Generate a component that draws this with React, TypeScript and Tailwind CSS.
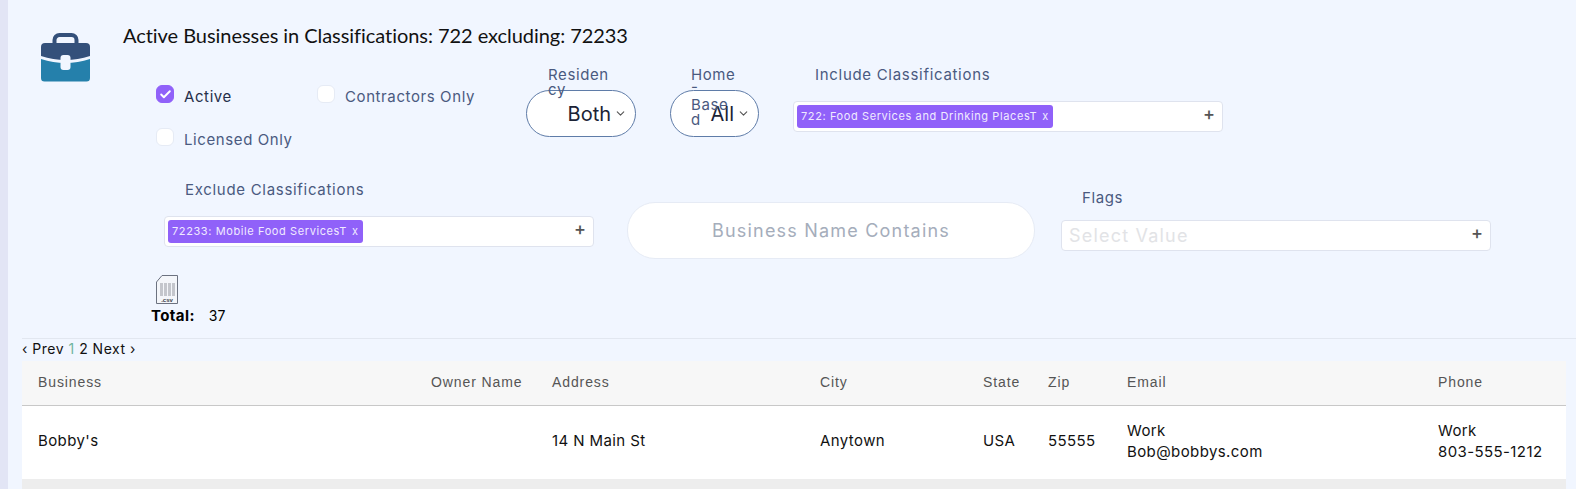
import { ChevronDown, Check } from "lucide-react";

const sans = "font-['Inter','Noto_Sans',sans-serif]";

function Briefcase() {
  return (
    <svg width="49" height="49" viewBox="0 0 49 49" className="shrink-0">
      <path d="M13.5 11V7a5 5 0 0 1 5-5h12a5 5 0 0 1 5 5v4" fill="none" stroke="#34507a" strokeWidth="4" />
      <path d="M4 10h41a4 4 0 0 1 4 4v9Q24.5 31 0 23v-9a4 4 0 0 1 4-4z" fill="#34507a" />
      <path d="M0 26Q24.5 34 49 26v19a3.500 3.500 0 0 1-3.500 3.500h-42A3.500 3.500 0 0 1 0 45z" fill="#2580ab" />
      <rect x="19.500" y="22" width="10" height="15" rx="3" fill="#f1f6ff" />
    </svg>
  );
}

function CsvIcon() {
  return (
    <svg width="22" height="29" viewBox="0 0 22 29">
      <path d="M6 .5h15.500v28H.5V7z" fill="#f4f6fa" stroke="#6c7280" />
      <path d="M4 8h3v13H4zM8 8h3v13H8zM12 8h3v13h-3zM16 8h3v13h-3z" fill="#c4c6cc" />
      <text x="11" y="26.500" textAnchor="middle" fontSize="6" fontWeight="700" fill="#3a3f4a" fontFamily="Liberation Sans, sans-serif">.csv</text>
    </svg>
  );
}

function Box({ checked }: { checked?: boolean }) {
  return (
    <span
      className={`flex size-[18px] shrink-0 items-center justify-center rounded-[6px] border ${
        checked ? "border-[#9061f9] bg-[#9061f9]" : "border-[#e6ebf5] bg-white"
      }`}
    >
      {checked && <Check size={13} strokeWidth={3.5} className="text-white" />}
    </span>
  );
}

function CheckItem({ label, checked }: { label: string; checked?: boolean }) {
  return (
    <div className="flex items-start">
      <Box checked={checked} />
      <span className={`ml-[10px] mt-[3px] text-[15px] leading-[17px] tracking-[0.6px] ${checked ? "text-[#252f4a]" : "text-[#4a5a80]"}`}>
        {label}
      </span>
    </div>
  );
}

function Pill({ value, className }: { value: string; className: string }) {
  return (
    <div className={`flex h-[47px] items-center justify-end rounded-[24px] border border-[#5f7ca8] bg-white pr-[8px] ${className}`}>
      <span className="text-[20px] text-[#1b2336]">{value}</span>
      <ChevronDown size={13} className="ml-[3px] text-[#555]" />
    </div>
  );
}

function TagBox({ tag, placeholder, className }: { tag?: string; placeholder?: string; className: string }) {
  return (
    <div className={`flex h-[31px] items-center justify-between rounded-[4px] border border-[#dfe3ee] bg-white pl-[3px] pr-[7px] ${className}`}>
      {tag ? (
        <span className="flex h-[23px] items-center whitespace-nowrap rounded-[3px] bg-[#9061f9] px-[4px] text-[11px] tracking-[0.6px] text-[#f0ebff]">
          {tag}
          <span className="ml-[5px]">x</span>
        </span>
      ) : (
        <span className="pl-[4px] text-[18px] tracking-[1.2px] text-[#e2e3e6]">{placeholder}</span>
      )}
      <span className="mb-[5px] text-[18px] font-medium leading-none text-[#555]">+</span>
    </div>
  );
}

const heads = ["Business", "Owner Name", "Address", "City", "State", "Zip", "Email", "Phone"];

export default function App() {
  return (
    <div className={`flex h-[489px] overflow-hidden bg-[#e2e5f5] text-black ${sans}`}>
      <main className="ml-[8px] w-[1568px] bg-[#f1f6ff]">
        <div className="flex h-[182px] pl-[33px] pt-[33px]">
          <Briefcase />
          <div className="-mt-[33px] ml-[33px] pt-[24px]">
            <h1 className="font-['Lato',sans-serif] text-[20px] leading-[22px] tracking-[-0.05px] text-[#111]">
              Active Businesses in Classifications: 722 excluding: 72233
            </h1>
            <div className="mt-[21px] flex pl-[33px]">
              <div className="w-[370px] pt-[18px]">
                <div className="grid w-[360px] grid-cols-[161px_1fr] gap-y-[23px]">
                  <CheckItem label="Active" checked />
                  <CheckItem label="Contractors Only" />
                  <CheckItem label="Licensed Only" />
                </div>
              </div>
              <div className="w-[110px]">
                <div className="relative z-10 h-[23px] pl-[22px] text-[15px] leading-[15px] tracking-[0.6px] text-[#4a5a80]">
                  Residen<br />cy
                </div>
                <Pill value="Both" className="w-[110px]" />
              </div>
              <div className="ml-[34px] w-[89px]">
                <div className="relative z-10 h-[23px] pl-[21px] text-[15px] leading-[15px] tracking-[0.6px] text-[#4a5a80]">
                  Home<br /><span className="relative -top-[3px]">-</span><br />Base<br />d
                </div>
                <Pill value="All" className="w-[89px]" />
              </div>
              <div className="ml-[34px] w-[430px]">
                <div className="h-[34px] pl-[22px] text-[15px] leading-[15px] tracking-[0.7px] text-[#4a5a80]">
                  Include Classifications
                </div>
                <TagBox tag="722: Food Services and Drinking PlacesT" className="w-[430px]" />
              </div>
            </div>
          </div>
        </div>

        <div className="flex h-[93px] items-start pl-[156px]">
          <div className="w-[430px]">
            <div className="h-[34px] pl-[21px] text-[15px] leading-[16px] tracking-[0.7px] text-[#4a5a80]">
              Exclude Classifications
            </div>
            <TagBox tag="72233: Mobile Food ServicesT" className="w-[430px]" />
          </div>
          <div className="ml-[33px] mt-[20px] flex h-[57px] w-[408px] items-center justify-center rounded-[28px] border border-[#e6ebf5] bg-white text-[18px] tracking-[1.2px] text-[#a5adbb]">
            Business Name Contains
          </div>
          <div className="ml-[26px] mt-[8px] w-[430px]">
            <div className="h-[30px] pl-[21px] text-[15px] leading-[16px] tracking-[0.6px] text-[#4a5a80]">Flags</div>
            <TagBox placeholder="Select Value" className="w-[430px]" />
          </div>
        </div>

        <div className="ml-[14px] h-[64px] border-b border-[#e2e7f0] pl-[129px]">
          <div className="ml-[5px]"><CsvIcon /></div>
          <div className="mt-[3px] flex text-[15px] leading-[18px]">
            <span className="font-bold tracking-[0.4px]">Total:</span>
            <span className="ml-[14px] text-[14px]">37</span>
          </div>
        </div>

        <div className="flex h-[22px] items-center pb-[3px] pl-[14px] text-[14px] tracking-[0.5px] text-[#111]">
          ‹ Prev&nbsp;<span className="text-[#6fb5a0]">1</span>&nbsp;2 Next ›
        </div>

        <div className="ml-[14px] w-[1544px] rounded-tr-[4px] bg-white">
          <table className="w-full table-fixed border-collapse">
            <colgroup>
              <col className="w-[393px]" />
              <col className="w-[121px]" />
              <col className="w-[268px]" />
              <col className="w-[163px]" />
              <col className="w-[65px]" />
              <col className="w-[79px]" />
              <col className="w-[311px]" />
              <col className="w-[144px]" />
            </colgroup>
            <thead>
              <tr className="h-[44px] border-b border-[#c8c8c8] bg-[#f7f7f7]">
                {heads.map((h) => (
                  <th key={h} className="pl-[16px] text-left font-['Liberation_Sans',sans-serif] text-[14px] font-normal tracking-[0.9px] text-[#555]">
                    {h}
                  </th>
                ))}
              </tr>
            </thead>
            <tbody className="text-[15px] leading-[21px] tracking-[0.4px] text-[#111]">
              <tr className="h-[74px]">
                <td className="pb-[3px] pl-[16px]">Bobby's</td>
                <td />
                <td className="pb-[3px] pl-[16px]">14 N Main St</td>
                <td className="pb-[3px] pl-[16px]">Anytown</td>
                <td className="pb-[3px] pl-[16px]">USA</td>
                <td className="pb-[3px] pl-[16px]">55555</td>
                <td className="pb-[3px] pl-[16px]">Work<br />Bob@bobbys.com</td>
                <td className="pb-[3px] pl-[16px]">Work<br />803-555-1212</td>
              </tr>
              <tr className="h-[12px] bg-[#ededed]"><td colSpan={8} /></tr>
            </tbody>
          </table>
        </div>
      </main>
    </div>
  );
}
